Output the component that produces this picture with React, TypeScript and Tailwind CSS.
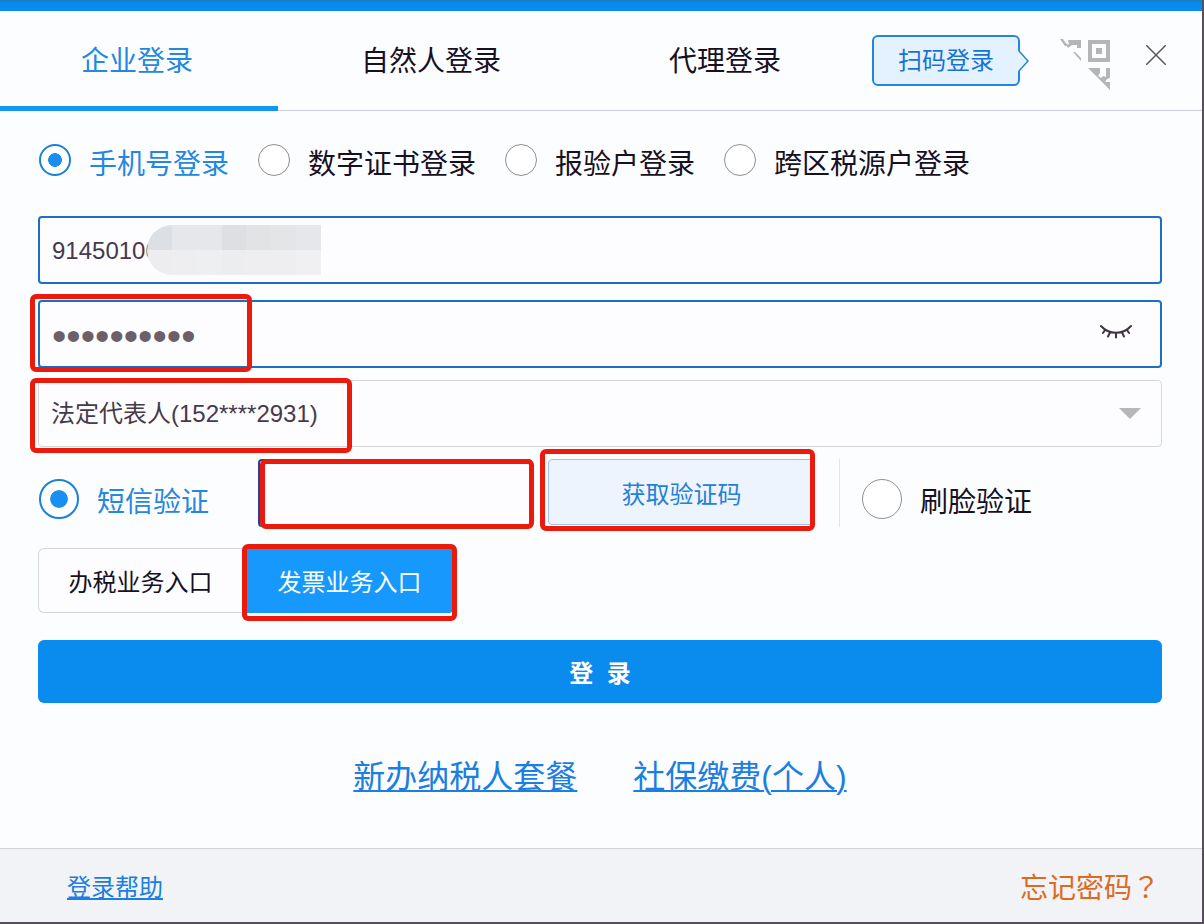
import React, { useState } from 'react';

const loginTypes = ['手机号登录', '数字证书登录', '报验户登录', '跨区税源户登录'];

const mosaic = [
  'bg-[#dcdfe3]', 'bg-[#e6e7ea]', 'bg-[#e6e7ea]', 'bg-[#dddfe2]', 'bg-[#e1e3e5]', 'bg-[#e4e5e7]', 'bg-[#e6e7ea]',
  'bg-[#ededf0]', 'bg-[#eeeef0]', 'bg-[#eeeff1]', 'bg-[#ecedef]', 'bg-[#eeeef0]', 'bg-[#eeeef0]', 'bg-[#f0f0f2]',
];

const Highlight = ({ className }: { className: string }) => (
  <span
    aria-hidden="true"
    className={`absolute border-[5px] border-[#ea1a0c] rounded-md pointer-events-none ${className}`}
  />
);

const QrIcon = () => (
  <svg viewBox="0 0 52 52" className="w-[52px] h-[52px]" fill="#b3b5bb" aria-hidden="true">
    <path d="M0 0h3l2 3 2 2-1 2H5zM8 1h13v8h-4V6h-5L8 9 6 6l3-1z" />
    <path d="M13 13h2l6 6v3z" />
    <path d="M28 1h22v22H28zM32 5v14h14V5z" fillRule="evenodd" />
    <path d="M36 9h6v6h-6z" />
    <path d="M28 29h12v5l-2 3 3 2 2-2 3 1V29h4v10l-3 1-2 3h5v8z" />
  </svg>
);

const EyeClosedIcon = () => (
  <svg viewBox="0 0 32 16" className="w-8 h-4" fill="none" stroke="#3f3542" strokeWidth="2" strokeLinecap="round" aria-hidden="true">
    <path d="M1 2c8 9 22 9 30 0M5 6l-2 3M10 8.500l-2 4M16 9.500v4M22 8.500l2 4M27 6l2 3" />
  </svg>
);

const App = () => {
  const [loginType, setLoginType] = useState(loginTypes[0]);
  const [verify, setVerify] = useState('sms');

  const radioClass =
    "appearance-none shrink-0 rounded-full border border-[#8e8e94] bg-white checked:border-2 checked:border-[#1c7fd8] checked:bg-[radial-gradient(circle,#1a8ff0_0_33%,transparent_36%)]";
  const fieldClass =
    "block w-full h-[68px] px-3 rounded-sm border-2 border-[#1c6fc4] bg-[#fdfdff] outline-none";

  return (
    <div className="min-h-screen flex flex-col bg-[#fcfdff] border-r-2 border-b-2 border-[#55505c] text-[#17101f] font-['Liberation_Sans','Noto_Sans_CJK_SC',sans-serif]">
      <div className="h-[11px] bg-[#078bee] border-t-2 border-[#1b7fc0]" />

      {/* Tabs */}
      <header className="grid grid-cols-[278fr_306fr_282fr_336fr] h-[100px] border-b border-[#cdd0dc] text-[28px]">
        <button className="h-[100px] pt-1.5 pr-1 border-b-[5px] border-[#1296f0] text-[#2487e0]">企业登录</button>
        <button className="h-[100px] pt-1.5 border-b-[5px] border-transparent">自然人登录</button>
        <button className="h-[100px] pt-1.5 border-b-[5px] border-transparent">代理登录</button>
        <div className="flex items-start pl-1.5 pt-6">
          <button className="relative w-[148px] h-[51px] shrink-0 rounded-md border-2 border-[#2386dc] bg-[#e4f1ff] text-2xl text-[#1673d4]">
            扫码登录
            <svg viewBox="0 0 12 24" className="absolute -right-3 top-3 w-3 h-6" aria-hidden="true">
              <path d="M0 1l10 11L0 23z" fill="#e4f1ff" />
              <path d="M1 0v2l9 10-9 10v2" fill="none" stroke="#2386dc" strokeWidth="1.500" />
            </svg>
          </button>
          <button aria-label="二维码" className="ml-10 mt-1 shrink-0">
            <QrIcon />
          </button>
          <button aria-label="关闭" className="ml-auto mr-9 mt-2.5 shrink-0">
            <svg viewBox="0 0 20 20" className="w-5 h-5" stroke="#5c565f" strokeWidth="1.500" aria-hidden="true">
              <path d="M0 0l20 20M20 0L0 20" />
            </svg>
          </button>
        </div>
      </header>

      <main className="pl-[38px] pr-10 pt-[33px]">
        {/* Login type */}
        <div className="flex h-10 gap-[29px] pl-px text-[28px] leading-[42px]">
          {loginTypes.map((type) => (
            <label
              key={type}
              className="flex items-start gap-[18px] whitespace-nowrap has-checked:text-[#2487e0]"
            >
              <input
                type="radio"
                name="loginType"
                checked={loginType === type}
                onChange={() => setLoginType(type)}
                className={`w-8 h-8 ${radioClass}`}
              />
              {type}
            </label>
          ))}
        </div>

        <div className="relative mt-8">
          <input
            aria-label="纳税人识别号"
            defaultValue="91450100"
            className={`${fieldClass} pt-0.5 text-2xl text-[#453a4b]`}
          />
          <div className="absolute left-[109px] top-[9px] w-[174px] h-[50px] grid grid-cols-7 overflow-hidden rounded-l-[25px]">
            {mosaic.map((color, i) => (
              <span key={i} className={color} />
            ))}
          </div>
        </div>

        <div className="relative mt-4">
          <input
            type="password"
            aria-label="密码"
            defaultValue="0123456789"
            className={`${fieldClass} pt-1 text-[41px] text-[#6b6068]`}
          />
          <button aria-label="显示密码" className="absolute right-[30px] top-6">
            <EyeClosedIcon />
          </button>
          <Highlight className="-left-2 -top-1.5 -bottom-1 w-[222px]" />
        </div>

        <div className="relative mt-3">
          <select
            aria-label="办税人员"
            className="appearance-none block w-full h-[67px] px-3 rounded-sm border border-[#d5d6dc] bg-[#fdfdff] text-2xl text-[#453a4b] outline-none"
          >
            <option>法定代表人(152****2931)</option>
          </select>
          <svg viewBox="0 0 22 11" className="absolute right-[21px] top-7 w-[22px] h-[11px] pointer-events-none" aria-hidden="true">
            <path d="M0 0h22L11 11z" fill="#b7b7b9" />
          </svg>
          <Highlight className="-left-2 -top-0.5 -bottom-1.5 w-[322px]" />
        </div>

        {/* Verification */}
        <div className="mt-3 grid grid-cols-[220fr_290fr_291fr_323fr] text-[28px]">
          <label className="flex items-center gap-[18px] whitespace-nowrap pl-px pt-3 has-checked:text-[#2487e0]">
            <input
              type="radio"
              name="verify"
              checked={verify === 'sms'}
              onChange={() => setVerify('sms')}
              className={`w-10 h-10 ${radioClass}`}
            />
            <span className="pt-2">短信验证</span>
          </label>
          <div className="relative pr-4">
            <input
              aria-label="验证码"
              className="block w-full h-[68px] px-3 rounded-sm border-2 border-[#27409c] bg-[#fdfdff] text-2xl outline-none"
            />
            <Highlight className="left-0.5 right-3.5 top-0 -bottom-0.5" />
          </div>
          <div className="relative pr-6">
            <button className="block w-full h-[66px] pt-1.5 rounded-sm border border-[#9fc4ea] bg-[#edf4fe] text-2xl text-[#2480d8]">
              获取验证码
            </button>
            <Highlight className="-left-2 right-6 -top-2.5 -bottom-1" />
          </div>
          <label className="flex items-center gap-[18px] whitespace-nowrap border-l border-[#e3e4ec] pl-[22px] pt-3 has-checked:text-[#2487e0]">
            <input
              type="radio"
              name="verify"
              checked={verify === 'face'}
              onChange={() => setVerify('face')}
              className={`w-10 h-10 ${radioClass}`}
            />
            <span className="pt-2">刷脸验证</span>
          </label>
        </div>

        {/* Entry switch */}
        <div className="mt-[21px] flex gap-1 text-2xl">
          <button className="w-[204px] h-[65px] pt-1 rounded-l-md border border-r-0 border-[#d5d6dc] bg-[#fdfdff]">
            办税业务入口
          </button>
          <div className="relative">
            <button className="block w-[207px] h-[65px] pt-1 rounded-r-sm bg-[#1798fd] text-white">
              发票业务入口
            </button>
            <Highlight className="-left-1 -right-1 -top-1 -bottom-2" />
          </div>
        </div>

        <button className="mt-[27px] block w-full h-[63px] pt-1 rounded-md bg-[#0a8bee] text-2xl font-bold text-white whitespace-pre">
          登  录
        </button>

        <div className="mt-[49px] flex justify-center gap-14 text-[32px] leading-[50px] text-[#1b7ee0]">
          <a href="#" className="underline decoration-2 underline-offset-2">新办纳税人套餐</a>
          <a href="#" className="underline decoration-2 underline-offset-2">社保缴费(个人)</a>
        </div>
      </main>

      <footer className="mt-auto h-[74px] flex items-center justify-between border-t border-[#d3d4d9] bg-[#f2f3f6] pt-1 pl-[67px] pr-[42px]">
        <a href="#" className="text-2xl text-[#1b7ee0] underline decoration-2 underline-offset-2">登录帮助</a>
        <a href="#" className="text-[28px] text-[#dd6b1f]">
          忘记密码<span className="font-['Noto_Sans_CJK_TC',sans-serif]">？</span>
        </a>
      </footer>
    </div>
  );
};

export default App;
